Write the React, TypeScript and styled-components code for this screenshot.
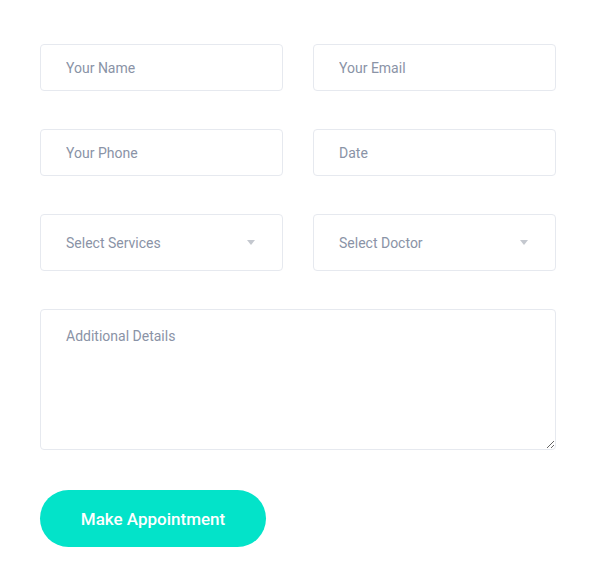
import styled, { createGlobalStyle } from "styled-components";

const GlobalStyle = createGlobalStyle`
  body {
    margin: 0;
    background: #ffffff;
    font-family: Roboto, "Liberation Sans", sans-serif;
  }
`;

export default function App() {
  return (
    <>
      <GlobalStyle />
      <Form onSubmit={(e) => e.preventDefault()}>
        <Row>
          <Input placeholder="Your Name" />
          <Input placeholder="Your Email" />
        </Row>
        <Row>
          <Input placeholder="Your Phone" />
          <Input placeholder="Date" />
        </Row>
        <Row>
          <SelectBox>
            <span>Select Services</span>
            <Caret />
          </SelectBox>
          <SelectBox>
            <span>Select Doctor</span>
            <Caret />
          </SelectBox>
        </Row>
        <TextArea placeholder="Additional Details" />
        <SubmitButton type="submit">Make Appointment</SubmitButton>
      </Form>
    </>
  );
}

const Form = styled.form`
  width: 516px;
  padding: 44px 40px 0;
  display: flex;
  flex-direction: column;
  gap: 38px;
`;

const Row = styled.div`
  display: grid;
  grid-template-columns: 243px 243px;
  column-gap: 30px;
`;

const Input = styled.input`
  box-sizing: border-box;
  height: 47px;
  padding: 0 25px;
  border: 1px solid #e6e9ef;
  border-radius: 4px;
  background: #fff;
  font-family: Roboto, "Liberation Sans", sans-serif;
  font-size: 14px;
  color: #5f6b80;
  outline: none;

  &::placeholder {
    color: #8a93a6;
  }
`;

const SelectBox = styled.div`
  box-sizing: border-box;
  height: 57px;
  padding: 0 27px 0 25px;
  border: 1px solid #e6e9ef;
  border-radius: 4px;
  display: flex;
  align-items: center;
  justify-content: space-between;
  font-size: 14px;
  color: #8a93a6;
`;

const Caret = styled.span`
  width: 0;
  height: 0;
  border-left: 4px solid transparent;
  border-right: 4px solid transparent;
  border-top: 5px solid #c4c8cf;
`;

const TextArea = styled.textarea`
  box-sizing: border-box;
  width: 516px;
  height: 141px;
  padding: 18px 25px;
  border: 1px solid #e6e9ef;
  border-radius: 4px;
  font-family: Roboto, "Liberation Sans", sans-serif;
  font-size: 14px;
  outline: none;
  resize: vertical;

  &::placeholder {
    color: #8a93a6;
  }
`;

const SubmitButton = styled.button`
  align-self: flex-start;
  margin-top: 2px;
  width: 226px;
  height: 57px;
  border: none;
  border-radius: 29px;
  background: #03e3c9;
  color: #ffffff;
  font-family: Roboto, "Liberation Sans", sans-serif;
  font-size: 17px;
  font-weight: 500;
  cursor: pointer;
`;
